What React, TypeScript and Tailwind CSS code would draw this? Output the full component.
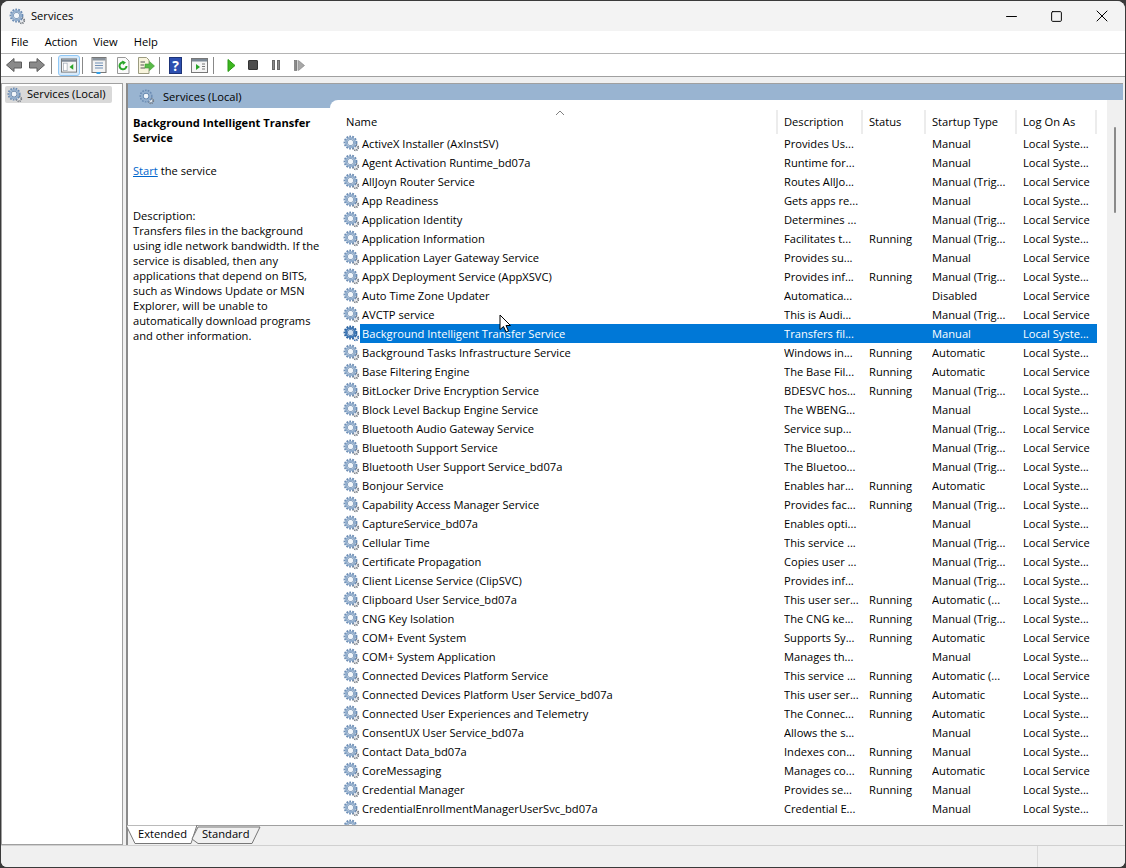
import { Minus, Square, X } from 'lucide-react';

type Row = [string, string, string, string, string];

const rows: Row[] = [
  ['ActiveX Installer (AxInstSV)', 'Provides Us...', '', 'Manual', 'Local Syste...'],
  ['Agent Activation Runtime_bd07a', 'Runtime for...', '', 'Manual', 'Local Syste...'],
  ['AllJoyn Router Service', 'Routes AllJo...', '', 'Manual (Trig...', 'Local Service'],
  ['App Readiness', 'Gets apps re...', '', 'Manual', 'Local Syste...'],
  ['Application Identity', 'Determines ...', '', 'Manual (Trig...', 'Local Service'],
  ['Application Information', 'Facilitates t...', 'Running', 'Manual (Trig...', 'Local Syste...'],
  ['Application Layer Gateway Service', 'Provides su...', '', 'Manual', 'Local Service'],
  ['AppX Deployment Service (AppXSVC)', 'Provides inf...', 'Running', 'Manual (Trig...', 'Local Syste...'],
  ['Auto Time Zone Updater', 'Automatica...', '', 'Disabled', 'Local Service'],
  ['AVCTP service', 'This is Audi...', '', 'Manual (Trig...', 'Local Service'],
  ['Background Intelligent Transfer Service', 'Transfers fil...', '', 'Manual', 'Local Syste...'],
  ['Background Tasks Infrastructure Service', 'Windows in...', 'Running', 'Automatic', 'Local Syste...'],
  ['Base Filtering Engine', 'The Base Fil...', 'Running', 'Automatic', 'Local Service'],
  ['BitLocker Drive Encryption Service', 'BDESVC hos...', 'Running', 'Manual (Trig...', 'Local Syste...'],
  ['Block Level Backup Engine Service', 'The WBENG...', '', 'Manual', 'Local Syste...'],
  ['Bluetooth Audio Gateway Service', 'Service sup...', '', 'Manual (Trig...', 'Local Service'],
  ['Bluetooth Support Service', 'The Bluetoo...', '', 'Manual (Trig...', 'Local Service'],
  ['Bluetooth User Support Service_bd07a', 'The Bluetoo...', '', 'Manual (Trig...', 'Local Syste...'],
  ['Bonjour Service', 'Enables har...', 'Running', 'Automatic', 'Local Syste...'],
  ['Capability Access Manager Service', 'Provides fac...', 'Running', 'Manual (Trig...', 'Local Syste...'],
  ['CaptureService_bd07a', 'Enables opti...', '', 'Manual', 'Local Syste...'],
  ['Cellular Time', 'This service ...', '', 'Manual (Trig...', 'Local Service'],
  ['Certificate Propagation', 'Copies user ...', '', 'Manual (Trig...', 'Local Syste...'],
  ['Client License Service (ClipSVC)', 'Provides inf...', '', 'Manual (Trig...', 'Local Syste...'],
  ['Clipboard User Service_bd07a', 'This user ser...', 'Running', 'Automatic (...', 'Local Syste...'],
  ['CNG Key Isolation', 'The CNG ke...', 'Running', 'Manual (Trig...', 'Local Syste...'],
  ['COM+ Event System', 'Supports Sy...', 'Running', 'Automatic', 'Local Service'],
  ['COM+ System Application', 'Manages th...', '', 'Manual', 'Local Syste...'],
  ['Connected Devices Platform Service', 'This service ...', 'Running', 'Automatic (...', 'Local Service'],
  ['Connected Devices Platform User Service_bd07a', 'This user ser...', 'Running', 'Automatic', 'Local Syste...'],
  ['Connected User Experiences and Telemetry', 'The Connec...', 'Running', 'Automatic', 'Local Syste...'],
  ['ConsentUX User Service_bd07a', 'Allows the s...', '', 'Manual', 'Local Syste...'],
  ['Contact Data_bd07a', 'Indexes con...', 'Running', 'Manual', 'Local Syste...'],
  ['CoreMessaging', 'Manages co...', 'Running', 'Automatic', 'Local Service'],
  ['Credential Manager', 'Provides se...', 'Running', 'Manual', 'Local Syste...'],
  ['CredentialEnrollmentManagerUserSvc_bd07a', 'Credential E...', '', 'Manual', 'Local Syste...'],
  ['', '', '', '', ''],
];

const descLines = [
  'Transfers files in the background',
  'using idle network bandwidth. If the',
  'service is disabled, then any',
  'applications that depend on BITS,',
  'such as Windows Update or MSN',
  'Explorer, will be unable to',
  'automatically download programs',
  'and other information.',
];

const Gear = ({ className = 'w-[17px] h-[17px]', selected = false }: { className?: string; selected?: boolean }) => (
  <svg viewBox="0 0 17 17" className={`${className} shrink-0`}>
    <circle cx="12.6" cy="12.6" r="2.6" fill="none" stroke={selected ? '#2f66a8' : '#747a82'} strokeWidth="1.9" strokeDasharray="1.2 0.85" />
    <circle cx="12.6" cy="12.6" r="1.5" fill="#e4e7eb" />
    <circle cx="7.5" cy="7.5" r="5.7" fill="none" stroke={selected ? '#2a629f' : '#6a8bb3'} strokeWidth="2.4" strokeDasharray="1.7 1.08" />
    <circle cx="7.5" cy="7.5" r="4.5" fill="none" stroke={selected ? '#3f78b5' : '#92aecd'} strokeWidth="2" />
    <circle cx="7.5" cy="7.5" r="3" fill="none" stroke={selected ? '#174f94' : '#567aa5'} strokeWidth="0.9" />
    <circle cx="7.5" cy="7.5" r="2.5" fill={selected ? '#cfdff0' : '#f2f6fa'} />
  </svg>
);

const ToolbarIcons = () => (
  <div className="h-[23px] shrink-0 flex items-center bg-white border-b border-[#a0a0a0] pl-[5px]">
    <svg width="16" height="16" viewBox="0 0 16 16" className="mr-[7px]">
      <path d="M0.5 8 L8 1.5 V5 H15.5 V11 H8 V14.5 Z" fill="#8a8a8a" stroke="#5c5c5c" />
    </svg>
    <svg width="16" height="16" viewBox="0 0 16 16">
      <path d="M15.5 8 L8 1.5 V5 H0.5 V11 H8 V14.5 Z" fill="#8a8a8a" stroke="#5c5c5c" />
    </svg>
    <div className="w-px h-[17px] bg-[#888] ml-[6px] mr-[6px]" />
    <div className="w-[22px] h-[21px] rounded-[3px] border border-[#90c8f6] bg-[#d8eafa] flex items-center justify-center">
      <svg width="16" height="15" viewBox="0 0 17 15">
        <rect x="0.5" y="0.5" width="16" height="14" fill="#f5f5f5" stroke="#777" />
        <rect x="1" y="1" width="15" height="2.5" fill="#7b8794" />
        <rect x="2.5" y="5" width="4" height="8" fill="#fff" stroke="#9aa5b1" strokeWidth="0.7" />
        <path d="M13 6 V12 L9 9 Z" fill="#2aa52a" />
      </svg>
    </div>
    <div className="w-px h-[17px] bg-[#888] ml-[2px] mr-[8px]" />
    <svg width="16" height="17" viewBox="0 0 16 17" className="mr-[9px]">
      <rect x="1" y="0.5" width="14" height="15" fill="#f2f2f2" stroke="#777" />
      <rect x="1.5" y="1" width="13" height="2.5" fill="#8a939c" />
      <path d="M4 6 H12 M4 8.5 H12 M4 11 H12" stroke="#6f8fb5" />
      <rect x="5.5" y="15" width="4" height="2" fill="#33a0e8" />
    </svg>
    <svg width="16" height="17" viewBox="0 0 16 17" className="mr-[5px]">
      <path d="M1.5 0.5 H9.5 L13 4 V16.5 H1.5 Z" fill="#fafafa" stroke="#999" />
      <path d="M10.5 9 A3.5 3.5 0 1 1 8 5.5" fill="none" stroke="#2aa52a" strokeWidth="2" />
      <path d="M6 3.5 L10 5.5 L7 8 Z" fill="#2aa52a" />
    </svg>
    <svg width="18" height="17" viewBox="0 0 18 17">
      <path d="M1.5 0.5 H9.5 L12 3 V16.5 H1.5 Z" fill="#f8f4dc" stroke="#9b9b80" />
      <path d="M3.5 5 H8 M3.5 8 H7 M3.5 11 H8" stroke="#555" />
      <path d="M8 7 H12.5 V4.5 L17.5 9 L12.5 13.5 V11 H8 Z" fill="#58b947" stroke="#3f9a33" strokeWidth="0.6" />
    </svg>
    <div className="w-px h-[17px] bg-[#888] ml-[4px] mr-[9px]" />
    <div className="w-[13px] h-[17px] bg-[#2d4fb0] border border-[#1d3377] text-white text-[14px] font-bold leading-[15px] text-center mr-[9px]">?</div>
    <svg width="17" height="15" viewBox="0 0 17 15">
      <rect x="0.5" y="0.5" width="16" height="14" fill="#f5f5f5" stroke="#777" />
      <rect x="1" y="1" width="15" height="2.5" fill="#7b8794" />
      <path d="M5 6 V12 L9 9 Z" fill="#2aa52a" />
      <path d="M11 6 H14 M11 8.5 H14 M11 11 H14" stroke="#777" />
    </svg>
    <div className="w-px h-[17px] bg-[#888] ml-[5px] mr-[13px]" />
    <svg width="9" height="13" viewBox="0 0 9 13" className="mr-[12px]">
      <path d="M1 0.5 L8 6.5 L1 12.5 Z" fill="#3db71f" stroke="#2a9a17" />
    </svg>
    <div className="w-[10px] h-[10px] bg-[#4d4d4d] border border-[#333] rounded-[1px] mr-[14px]" />
    <div className="flex gap-[2px] mr-[14px]">
      <div className="w-[3px] h-[10px] bg-[#8a8a8a] border-[0.5px] border-[#666]" />
      <div className="w-[3px] h-[10px] bg-[#8a8a8a] border-[0.5px] border-[#666]" />
    </div>
    <svg width="11" height="11" viewBox="0 0 11 11">
      <rect x="0.5" y="0.5" width="2.5" height="10" fill="#8a8a8a" stroke="#666" strokeWidth="0.6" />
      <path d="M4.5 0.5 L10.5 5.5 L4.5 10.5 Z" fill="#a8a8a8" stroke="#7c7c7c" strokeWidth="0.6" />
    </svg>
  </div>
);

const Cell = ({ w, children }: { w: string; children: string }) => (
  <div className={`${w} shrink-0 whitespace-nowrap overflow-hidden`}>{children}</div>
);

const HeaderCell = ({ w, label }: { w: string; label: string }) => (
  <div className={`${w} shrink-0 h-[24px] flex items-center pl-[6px] pt-[1px] border-r-2 border-[#ececec]`}>{label}</div>
);

export default function App() {
  return (
    <div
      className="w-[1126px] h-[868px] overflow-hidden bg-[#3a3a3a] text-[11.15px] text-black"
      style={{ fontFamily: '"Open Sans", "Noto Sans", sans-serif' }}
    >
      <div className="w-[1124px] h-[866px] mt-px ml-px rounded-t-[8px] rounded-b-[6px] overflow-hidden flex flex-col bg-[#f0f0f0]">
        {/* Title bar */}
        <div className="h-[30px] shrink-0 flex items-center bg-[#f3f3f3] pl-[8px]">
          <Gear />
          <span className="ml-[5px]">Services</span>
          <div className="ml-auto flex items-center">
            <div className="w-[45px] flex justify-center"><Minus size={17} strokeWidth={1.4} /></div>
            <div className="w-[45px] flex justify-center"><Square size={13} strokeWidth={1.8} /></div>
            <div className="w-[45px] flex justify-center mr-[1px]"><X size={20} strokeWidth={1.2} /></div>
          </div>
        </div>

        {/* Menu */}
        <div className="h-[23px] shrink-0 flex items-center bg-white border-b border-[#b4b4b4] pl-[10px] gap-[16px]">
          <span>File</span>
          <span>Action</span>
          <span>View</span>
          <span>Help</span>
        </div>

        <ToolbarIcons />

        {/* Main panes */}
        <div className="flex-1 min-h-0 flex pt-[6px] pr-[2px] bg-[#f0f0f0]">
          <div className="w-[122px] shrink-0 bg-white border border-[#a0a0a0] pt-[2px] pl-[3px]">
            <div className="h-[17px] w-[107px] flex items-center bg-[#d9d9d9] rounded-[2px] pl-[2px]">
              <Gear className="w-[16px] h-[16px]" />
              <span className="ml-[4px] whitespace-nowrap">Services (Local)</span>
            </div>
          </div>

          <div className="w-[3px] shrink-0" />

          <div className="flex-1 min-w-0 flex flex-col bg-white border-l-2 border-[#8a8a8a] border-t border-t-[#a0a0a0]">
            <div className="flex-1 min-h-0 flex flex-col bg-[#99b4d1]">
              {/* Blue extended header */}
              <div className="h-[16px] shrink-0 flex items-center pl-[11px] relative z-10">
                <Gear className="w-[16px] h-[16px] mt-[10px]" />
                <span className="ml-[8px] mt-[11px]">Services (Local)</span>
              </div>
              <div className="flex-1 min-h-0 flex">
                {/* Description pane */}
                <div className="w-[202px] shrink-0 flex flex-col">
                  <div className="h-[8px] shrink-0" />
                  <div className="flex-1 bg-white pl-[5px] leading-[15px]">
                    <div className="font-bold pt-[7px]">
                      <div>Background Intelligent Transfer</div>
                      <div>Service</div>
                    </div>
                    <div className="mt-[18px]">
                      <span className="text-[#0066cc] underline">Start</span> the service
                    </div>
                    <div className="mt-[30px]">Description:</div>
                    {descLines.map((line) => (
                      <div key={line} className="whitespace-nowrap">{line}</div>
                    ))}
                  </div>
                </div>

                {/* Service list */}
                <div className="flex-1 min-w-0 bg-white rounded-tl-[8px] flex overflow-hidden relative">
                  <div className="w-[767px] shrink-0 overflow-hidden pl-[10px]">
                    <div className="relative flex h-[34px] items-end">
                      <svg width="10" height="6" viewBox="0 0 10 6" className="absolute left-[215px] top-[10px]">
                        <path d="M1 5 L5 1 L9 5" fill="none" stroke="#808080" />
                      </svg>
                      <HeaderCell w="w-[438px]" label="Name" />
                      <HeaderCell w="w-[85px]" label="Description" />
                      <HeaderCell w="w-[63px]" label="Status" />
                      <HeaderCell w="w-[91px]" label="Startup Type" />
                      <HeaderCell w="w-[80px]" label="Log On As" />
                    </div>
                    {rows.map((r, i) => {
                      const selected = i === 10;
                      return (
                        <div key={i} className="flex h-[19px] items-center">
                          <div className="w-[20px] shrink-0 pl-[3px]">
                            <Gear selected={selected} />
                          </div>
                          <div className={`flex flex-1 h-full items-center pt-px ${selected ? 'bg-[#0078d7] text-white' : ''}`}>
                            <div className="w-[424px] shrink-0 pl-[2px] whitespace-nowrap overflow-hidden">{r[0]}</div>
                            <Cell w="w-[85px]">{r[1]}</Cell>
                            <Cell w="w-[63px]">{r[2]}</Cell>
                            <Cell w="w-[91px]">{r[3]}</Cell>
                            <Cell w="w-[74px]">{r[4]}</Cell>
                          </div>
                        </div>
                      );
                    })}
                  </div>

                  {/* Scrollbar */}
                  <div className="flex-1" />
                  <div className="w-[16px] shrink-0 bg-[#f0f0f0] pt-[27px] pl-[7px]">
                    <div className="w-[2px] h-[86px] bg-[#8a8a8a] rounded-full" />
                  </div>
                </div>
              </div>
            </div>

            {/* Tabs */}
            <div className="h-[20px] shrink-0 flex items-start bg-[#f0f0f0] border-t border-[#a0a0a0] pl-[4px] relative">
              <svg width="136" height="20" viewBox="0 0 136 20" className="absolute left-[-2px] top-[-1px]">
                <path d="M0 0 L9 18.5 H65 L71 0 Z" fill="#fff" stroke="#777" />
                <path d="M66 14 L72 2 H134 L126 18.5 H72 Z" fill="#f0f0f0" stroke="#777" />
              </svg>
              <span className="relative ml-[6px]">Extended</span>
              <span className="relative ml-[15px]">Standard</span>
            </div>
          </div>
        </div>

        {/* Status bar */}
        <div className="h-[22px] shrink-0 flex bg-[#f0f0f0] border-t border-[#d0d0d0]">
          <div className="w-[1037px] border-r border-[#d9d9d9]" />
        </div>
      </div>

      {/* Mouse cursor */}
      <svg width="14" height="20" viewBox="0 0 14 20" className="absolute left-[499px] top-[314px]">
        <path d="M1 1 V15.5 L4.5 12.5 L7 18 L9.5 17 L7 11.5 H11.5 Z" fill="#fff" stroke="#000" strokeWidth="1" />
      </svg>
    </div>
  );
}
